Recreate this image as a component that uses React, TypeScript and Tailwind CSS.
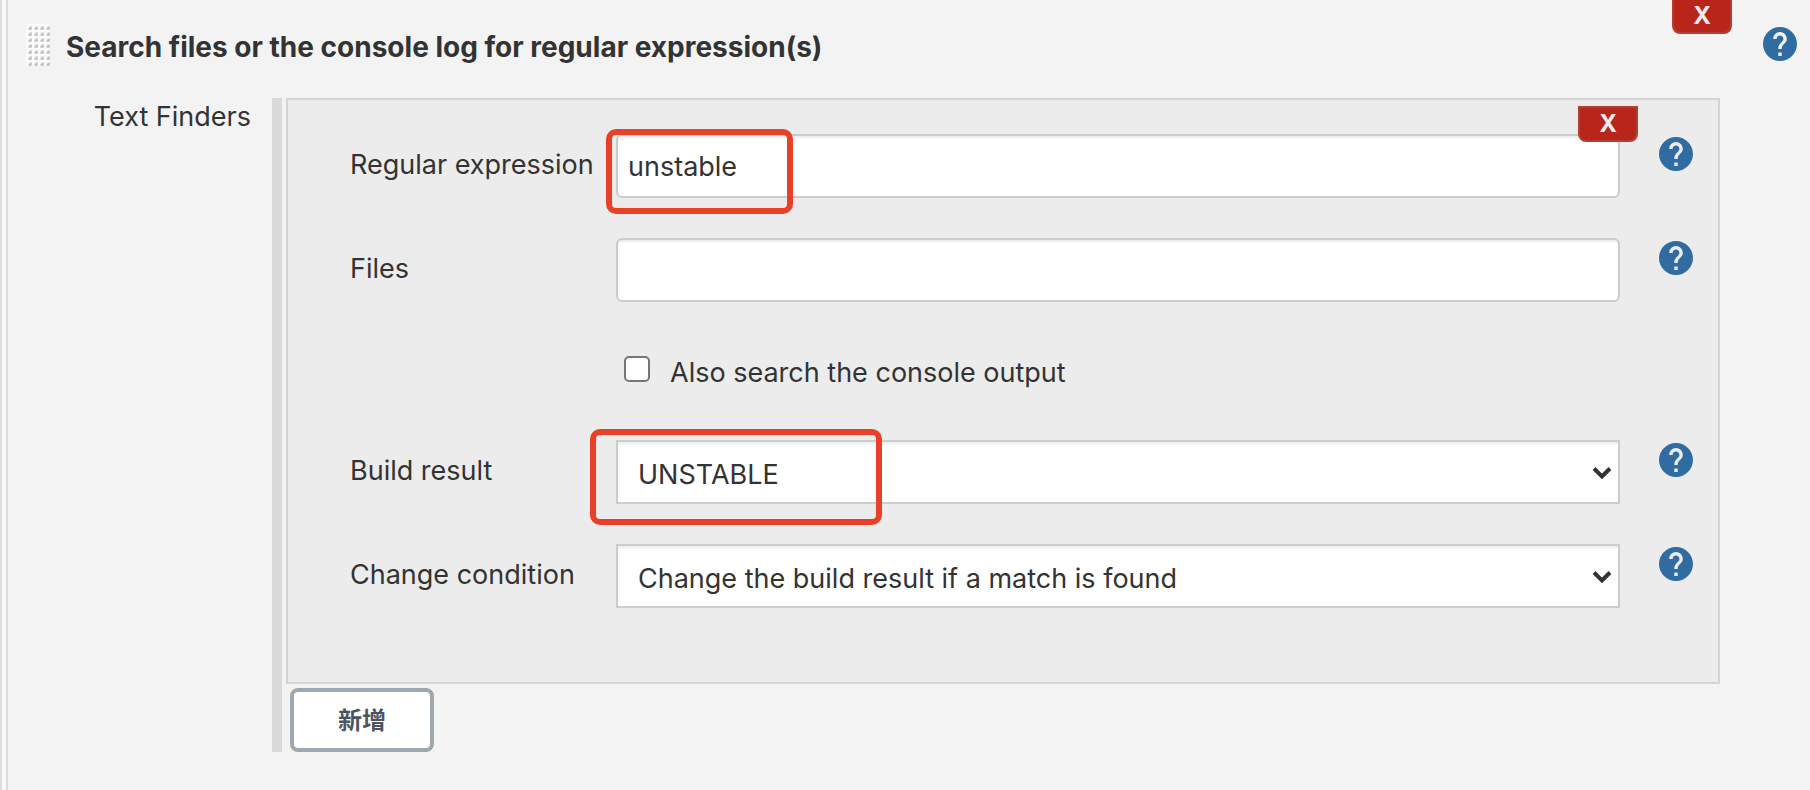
import React from "react";

function HelpIcon() {
  return (
    <svg viewBox="2 2 20 20" className="block size-[34px]" fill="#306ba1" aria-hidden="true">
      <path d="M12 2C6.48 2 2 6.48 2 12s4.48 10 10 10 10-4.48 10-10S17.52 2 12 2zm1 17h-2v-2h2v2zm2.07-7.75l-.9.92C13.45 12.9 13 13.5 13 15h-2v-.5c0-1.1.45-2.1 1.17-2.83l1.24-1.26c.37-.36.59-.86.59-1.41 0-1.1-.9-2-2-2s-2 .9-2 2H8c0-2.21 1.79-4 4-4s4 1.79 4 4c0 .88-.36 1.68-.93 2.25z" />
    </svg>
  );
}

function HelpLink({ topic }: { topic: string }) {
  return (
    <a href="#help" aria-label={`Help for ${topic}`} className="mt-[3px] block shrink-0">
      <HelpIcon />
    </a>
  );
}

function DragHandle() {
  return (
    <svg width="24" height="42" className="shrink-0" aria-hidden="true">
      <defs>
        <pattern id="grip" width="6" height="6" patternUnits="userSpaceOnUse">
          <rect width="6" height="6" fill="#fbfbfb" />
          <path d="M2 6V4L4 2H6V6Z" fill="#dedede" />
          <path d="M3 5.500V4.500L4.500 3H5.500V5.500Z" fill="#bdbdbd" />
        </pattern>
      </defs>
      <rect width="24" height="42" fill="url(#grip)" />
    </svg>
  );
}

function DeleteButton({ label }: { label: string }) {
  return (
    <button
      type="button"
      aria-label={label}
      className="flex h-9 w-[60px] items-center justify-center rounded-b-lg border-2 border-[#b23f33] bg-[#b9251b] text-2xl leading-none font-bold text-[#ececec]"
    >
      X
    </button>
  );
}

function Row({ id, label, children }: { id: string; label: string; children: React.ReactNode }) {
  return (
    <div className="flex items-start">
      <label htmlFor={id} className="w-[266px] shrink-0 pt-[13px] leading-9 whitespace-nowrap">
        {label}
      </label>
      <div className="relative min-w-0 flex-1">{children}</div>
      <div className="pl-[39px]">
        <HelpLink topic={label} />
      </div>
    </div>
  );
}

function TextField({ id, value }: { id: string; value: string }) {
  return (
    <input
      id={id}
      type="text"
      defaultValue={value}
      className="block h-16 w-full rounded-md border-2 border-[#ccc] bg-white px-2.5 shadow-[inset_0_2px_2px_rgba(0,0,0,0.075)] outline-none"
    />
  );
}

function SelectField({ id, options }: { id: string; options: string[] }) {
  return (
    <>
      <select
        id={id}
        className="block h-16 w-full appearance-none border-2 border-[#ccc] bg-white pt-1.5 pr-12 pl-5 shadow-[inset_0_2px_2px_rgba(0,0,0,0.075)] outline-none"
      >
        {options.map((o) => (
          <option key={o}>{o}</option>
        ))}
      </select>
      <svg
        viewBox="0 0 20 14"
        className="pointer-events-none absolute top-[26px] right-2 h-[14px] w-5"
        fill="none"
        stroke="#333"
        strokeWidth="4"
        aria-hidden="true"
      >
        <path d="M2 2.500L10 10.500L18 2.500" />
      </svg>
    </>
  );
}

export default function App() {
  return (
    <div className="min-h-screen border-l-2 border-[#dedede] bg-[#f8f8f8] pl-1 font-['Inter',sans-serif] text-[27px] text-[#333]">
      <main className="relative min-h-screen border-l-2 border-[#dadada] bg-[#f3f3f3]">
        <div className="absolute -top-0.5 right-[78px]">
          <DeleteButton label="Delete build step" />
        </div>
        <header className="flex items-start pt-6 pr-[13px] pb-7 pl-[18px]">
          <DragHandle />
          <h1 className="ml-4 flex-1 text-[28px] leading-[46px] font-bold">
            Search files or the console log for regular expression(s)
          </h1>
          <HelpLink topic="text finder" />
        </header>

        <div className="flex pr-[90px]">
          <h2 className="w-[264px] shrink-0 pt-px pr-[21px] text-right leading-9">Text Finders</h2>
          <div className="min-w-0 flex-1 border-l-[10px] border-[#dadada] pl-1">
            <section className="relative border-2 border-[#d4d4d4] bg-[#ececec] pt-[34px] pr-[25px] pb-[74px] pl-[62px]">
              <div className="flex flex-col gap-10">
                <Row id="regexp" label="Regular expression">
                  <TextField id="regexp" value="unstable" />
                  <div className="pointer-events-none absolute -top-[5px] -left-2.5 h-[85px] w-[187px] rounded-[10px] border-6 border-[#e94127]" />
                </Row>
                <Row id="files" label="Files">
                  <TextField id="files" value="" />
                </Row>
                <div className="flex h-[58px] items-start pl-[274px]">
                  <input
                    id="console"
                    type="checkbox"
                    className="mt-[14px] size-[26px] shrink-0 appearance-none rounded-[5px] border-2 border-[#767676] bg-white checked:bg-[#306ba1]"
                  />
                  <label htmlFor="console" className="pt-[13px] pl-5 leading-9">
                    Also search the console output
                  </label>
                </div>
                <Row id="result" label="Build result">
                  <SelectField id="result" options={["UNSTABLE", "SUCCESS", "FAILURE", "NOT_BUILT", "ABORTED"]} />
                  <div className="pointer-events-none absolute -top-[11px] -left-[26px] h-24 w-[292px] rounded-[10px] border-6 border-[#e94127]" />
                </Row>
                <Row id="condition" label="Change condition">
                  <SelectField
                    id="condition"
                    options={["Change the build result if a match is found", "Change the build result if a match is not found"]}
                  />
                </Row>
              </div>
              <div className="absolute top-1.5 right-20">
                <DeleteButton label="Delete text finder" />
              </div>
            </section>
            <button
              type="button"
              className="mt-1 ml-1 block h-16 w-36 rounded-lg border-4 border-[#9ea8af] bg-white pb-0.5 font-['Noto_Sans_CJK_SC',sans-serif] text-2xl leading-none font-bold text-[#4d545d]"
            >
              新增
            </button>
          </div>
        </div>
      </main>
    </div>
  );
}
